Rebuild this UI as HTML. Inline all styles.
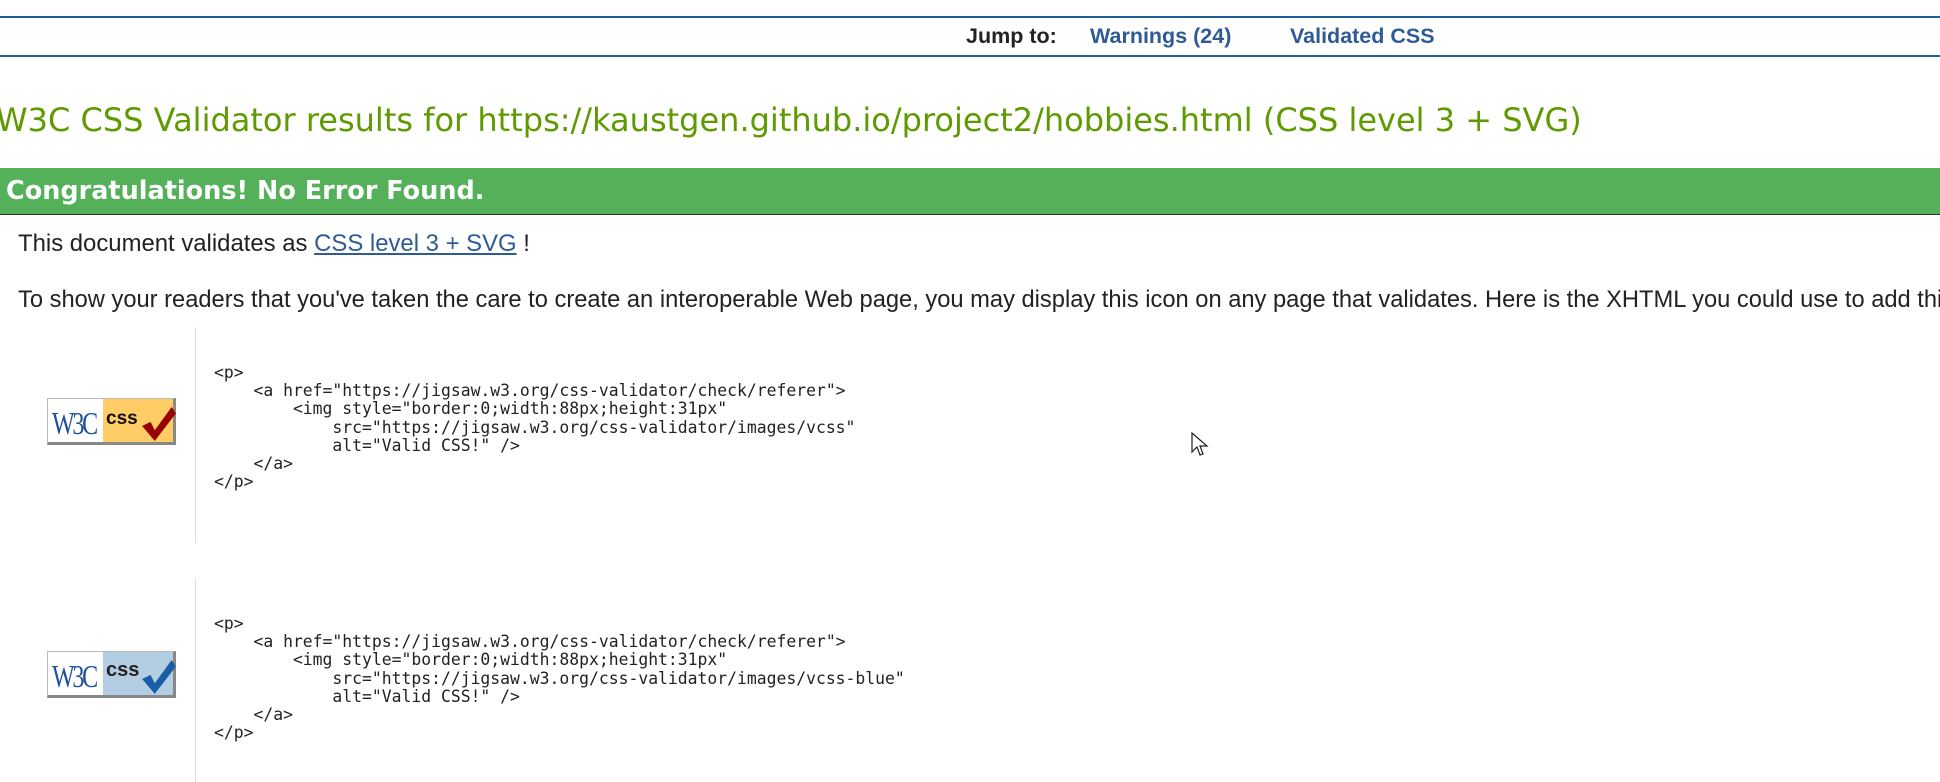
<!DOCTYPE html>
<html><head><meta charset="utf-8"><style>
*{margin:0;padding:0;box-sizing:border-box}
html,body{width:1940px;height:782px;overflow:hidden}
body{background:#fff;position:relative;font-family:"Liberation Sans",Arial,sans-serif}
.a{position:absolute;white-space:nowrap}
.hl{position:absolute;left:0;width:1940px;height:2px;background:#1f5e99}
.code{font-family:"DejaVu Sans Mono","Liberation Mono",monospace;font-size:16.4px;line-height:18.2px;color:#222;white-space:pre}
.vl{position:absolute;left:195px;width:1px;background:#ddd}
.ic{position:absolute;left:47px;width:129px;height:47px;background:#fff;border:1px solid #bbb;border-right:3px solid #888;border-bottom:3px solid #888}
</style></head><body>
<div class="hl" style="top:16px"></div>
<div class="hl" style="top:55px"></div>
<div class="a" style="left:966px;top:24px;font-size:21.5px;font-weight:bold;color:#222">Jump to:</div>
<div class="a" style="left:1090px;top:24px;font-size:21.5px;font-weight:bold;color:#2e5a96">Warnings (24)</div>
<div class="a" style="left:1290px;top:24px;font-size:21.5px;font-weight:bold;color:#2e5a96">Validated CSS</div>
<div class="a" style="left:-4px;top:101px;font-family:'DejaVu Sans',Verdana,sans-serif;font-size:32px;color:#5e9a00">W3C CSS Validator results for https://kaustgen.github.io/project2/hobbies.html (CSS level 3 + SVG)</div>
<div class="a" style="left:0;top:168px;width:1940px;height:47px;background:#55b05a;border-bottom:1px solid #333"></div>
<div class="a" style="left:6px;top:176px;font-family:'DejaVu Sans',Verdana,sans-serif;font-size:25.5px;font-weight:bold;color:#fff">Congratulations! No Error Found.</div>
<div class="a" style="left:18px;top:230px;font-size:23.9px;color:#222">This document validates as <span style="color:#2e5a96;text-decoration:underline">CSS level 3 + SVG</span> !</div>
<div style="position:absolute;left:0;top:280px;width:1940px;height:40px;overflow:hidden"><div class="a" style="left:18px;top:7px;font-size:23.7px;color:#222">To show your readers that you've taken the care to create an interoperable Web page, you may display this icon on any page that validates. Here is the XHTML you could use to add this icon to your Web page:</div></div>

<div class="vl" style="top:327px;height:216px"></div>
<div class="vl" style="top:578px;height:204px"></div>

<div class="ic" style="top:398px"><div style="position:absolute;left:55px;top:0;right:0;bottom:0;background:#ffcc66"></div>
<span class="a" style="left:4px;top:6px;font-family:'Liberation Serif',serif;font-size:32px;color:#1e4f9c;letter-spacing:-3px;transform:scaleX(.75);transform-origin:left">W3C</span>
<span class="a" style="left:58px;top:9px;font-size:19px;font-weight:bold;color:#111">css</span>
<svg class="a" style="left:92px;top:8px" width="38" height="36" viewBox="0 0 36 34"><path d="M2 18 L10 14 L14 22 L30 0 L34 6 L14 32 Z" fill="#990000"/></svg></div>

<div class="ic" style="top:651px"><div style="position:absolute;left:55px;top:0;right:0;bottom:0;background:#b3cde3"></div>
<span class="a" style="left:4px;top:6px;font-family:'Liberation Serif',serif;font-size:32px;color:#1e4f9c;letter-spacing:-3px;transform:scaleX(.75);transform-origin:left">W3C</span>
<span class="a" style="left:58px;top:7px;font-size:20px;font-weight:bold;color:#222">css</span>
<svg class="a" style="left:92px;top:8px" width="38" height="36" viewBox="0 0 36 34"><path d="M2 18 L10 14 L14 22 L30 0 L34 6 L14 32 Z" fill="#1a5fa6"/></svg></div>

<div class="a code" style="left:214px;top:364px">&lt;p&gt;
    &lt;a href="https://jigsaw.w3.org/css-validator/check/referer"&gt;
        &lt;img style="border:0;width:88px;height:31px"
            src="https://jigsaw.w3.org/css-validator/images/vcss"
            alt="Valid CSS!" /&gt;
    &lt;/a&gt;
&lt;/p&gt;</div>
<div class="a code" style="left:214px;top:615px">&lt;p&gt;
    &lt;a href="https://jigsaw.w3.org/css-validator/check/referer"&gt;
        &lt;img style="border:0;width:88px;height:31px"
            src="https://jigsaw.w3.org/css-validator/images/vcss-blue"
            alt="Valid CSS!" /&gt;
    &lt;/a&gt;
&lt;/p&gt;</div>

<svg class="a" style="left:1191px;top:432px" width="18" height="26" viewBox="0 0 18 26"><path d="M1 1 L1 20 L6 15 L9 23 L12 22 L9 14 L16 14 Z" fill="#fff" stroke="#222" stroke-width="1.2"/></svg>
</body></html>
